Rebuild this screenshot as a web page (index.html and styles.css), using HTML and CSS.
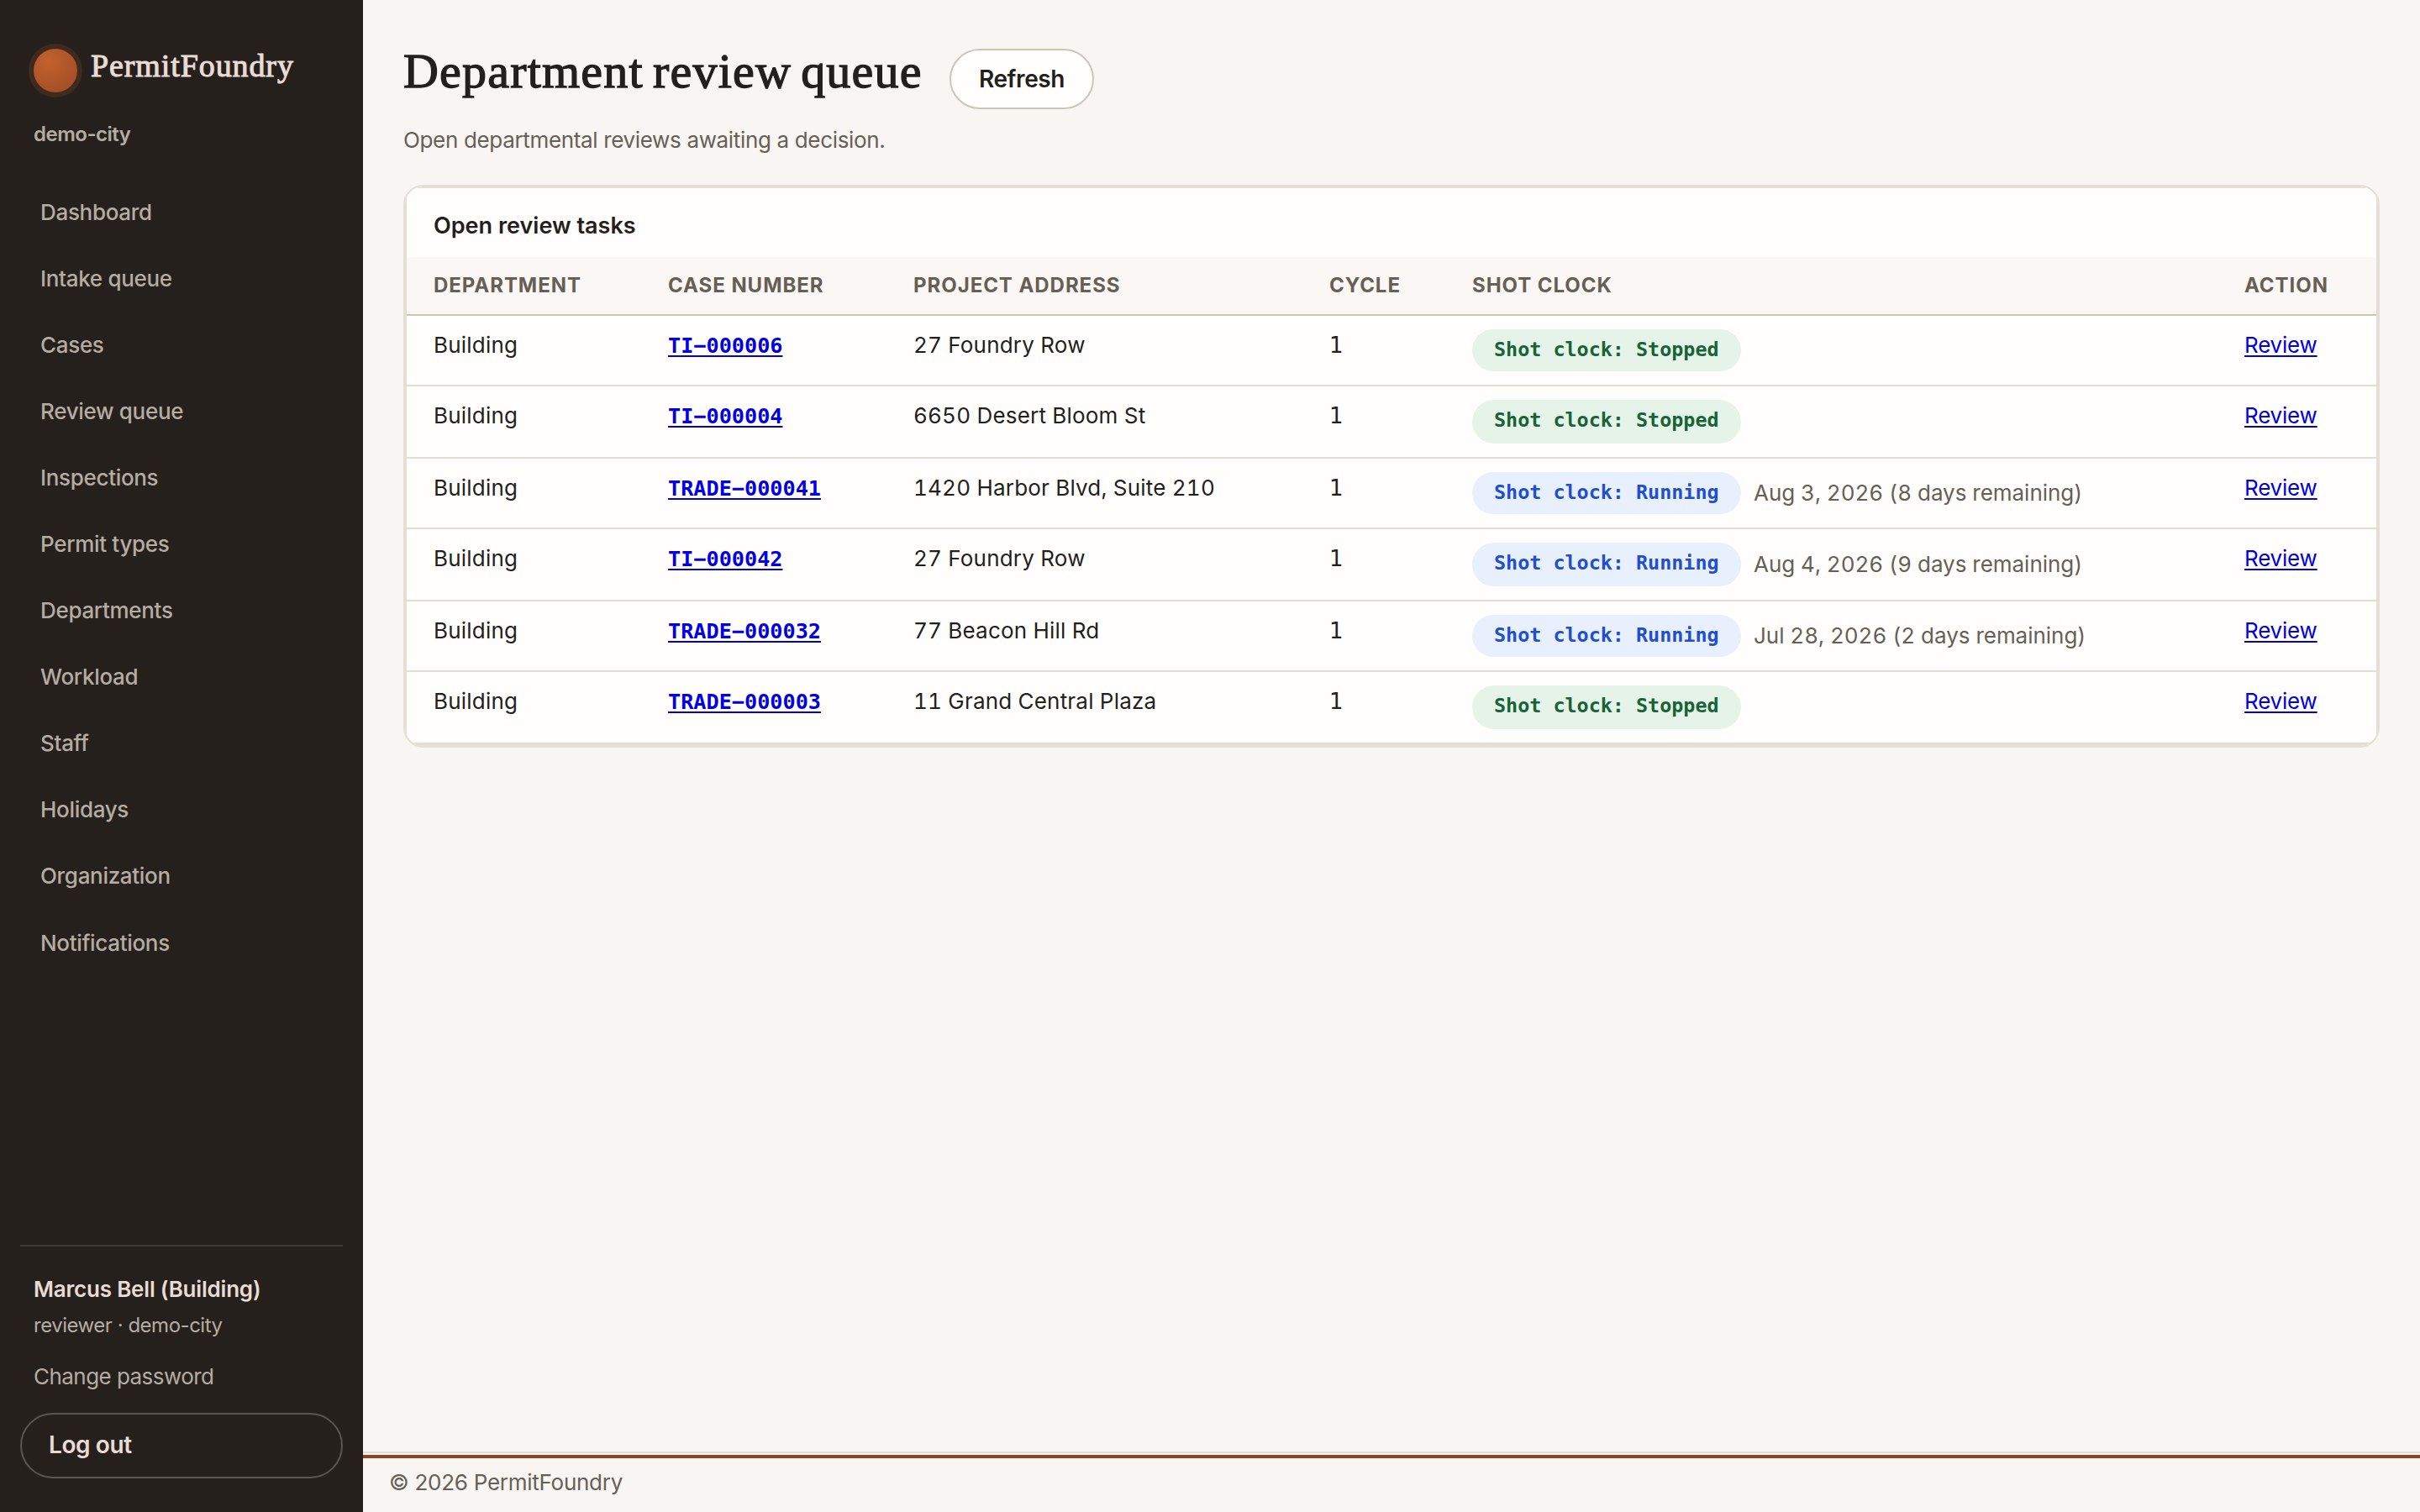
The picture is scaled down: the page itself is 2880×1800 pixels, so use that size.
FILE: index.html
```html
<!DOCTYPE html>
<html lang="en">
<head>
<meta charset="utf-8">
<title>Department review queue – PermitFoundry</title>
<link rel="stylesheet" href="styles.css">
</head>
<body>
<aside class="sidebar">
  <div class="brand"><span class="brand-mark"></span><span class="brand-name">PermitFoundry</span></div>
  <div class="tenant">demo-city</div>
  <nav class="nav">
    <a>Dashboard</a><a>Intake queue</a><a>Cases</a><a>Review queue</a><a>Inspections</a><a>Permit types</a><a>Departments</a><a>Workload</a><a>Staff</a><a>Holidays</a><a>Organization</a><a>Notifications</a>
  </nav>
  <div class="account">
    <div class="account-name">Marcus Bell (Building)</div>
    <div class="account-role">reviewer · demo-city</div>
    <a class="account-link">Change password</a>
    <button class="logout">Log out</button>
  </div>
</aside>
<div class="page">
  <main class="main">
    <header class="header"><h1 class="title">Department review queue</h1><button class="refresh">Refresh</button></header>
    <p class="subtitle">Open departmental reviews awaiting a decision.</p>
    <section class="card">
      <div class="card-inner">
        <h2 class="card-title">Open review tasks</h2>
        <table class="tasks">
          <colgroup><col class="c-dept"><col class="c-case"><col class="c-addr"><col class="c-cycle"><col class="c-clock"><col class="c-act"></colgroup>
          <thead><tr><th>Department</th><th>Case number</th><th>Project address</th><th>Cycle</th><th>Shot clock</th><th>Action</th></tr></thead>
          <tbody>
            <tr><td>Building</td><td><a class="case" href="#">TI−000006</a></td><td>27 Foundry Row</td><td class="cycle">1</td><td class="clock"><div class="clock-row"><span class="pill stopped">Shot clock: Stopped</span></div></td><td><a class="review" href="#">Review</a></td></tr>
            <tr><td>Building</td><td><a class="case" href="#">TI−000004</a></td><td>6650 Desert Bloom St</td><td class="cycle">1</td><td class="clock"><div class="clock-row"><span class="pill stopped">Shot clock: Stopped</span></div></td><td><a class="review" href="#">Review</a></td></tr>
            <tr><td>Building</td><td><a class="case" href="#">TRADE−000041</a></td><td>1420 Harbor Blvd, Suite 210</td><td class="cycle">1</td><td class="clock"><div class="clock-row"><span class="pill running">Shot clock: Running</span><span class="due">Aug 3, 2026 (8 days remaining)</span></div></td><td><a class="review" href="#">Review</a></td></tr>
            <tr><td>Building</td><td><a class="case" href="#">TI−000042</a></td><td>27 Foundry Row</td><td class="cycle">1</td><td class="clock"><div class="clock-row"><span class="pill running">Shot clock: Running</span><span class="due">Aug 4, 2026 (9 days remaining)</span></div></td><td><a class="review" href="#">Review</a></td></tr>
            <tr><td>Building</td><td><a class="case" href="#">TRADE−000032</a></td><td>77 Beacon Hill Rd</td><td class="cycle">1</td><td class="clock"><div class="clock-row"><span class="pill running">Shot clock: Running</span><span class="due">Jul 28, 2026 (2 days remaining)</span></div></td><td><a class="review" href="#">Review</a></td></tr>
            <tr><td>Building</td><td><a class="case" href="#">TRADE−000003</a></td><td>11 Grand Central Plaza</td><td class="cycle">1</td><td class="clock"><div class="clock-row"><span class="pill stopped">Shot clock: Stopped</span></div></td><td><a class="review" href="#">Review</a></td></tr>
          </tbody>
        </table>
      </div>
    </section>
  </main>
  <footer class="footer"><div class="footer-bar">© 2026 PermitFoundry</div></footer>
</div>
</body>
</html>
```
FILE: styles.css
```css
* { box-sizing: border-box; }

body {
  margin: 0;
  height: 1800px;
  display: flex;
  background: #f9f5f2;
  color: #231f1c;
  font: 400 26px/36px Inter, "Liberation Sans", sans-serif;
}

h1, h2, p { margin: 0; }

button { font-family: inherit; }

/* Sidebar */
.sidebar {
  width: 432px;
  height: 1800px;
  flex: none;
  display: flex;
  flex-direction: column;
  padding: 58px 24px 40px;
  background: #26201d;
  color: #b5aca2;
}

.brand {
  display: flex;
  align-items: center;
  gap: 16px;
  height: 52px;
  padding-left: 16px;
}

.brand-mark {
  width: 52px;
  height: 52px;
  border-radius: 50%;
  background: radial-gradient(circle at 35% 30%, #c2612e, #9c4a23);
  box-shadow: 0 0 0 6px #3f2a1f;
}

.brand-name {
  padding-bottom: 12px;
  font: 400 38px/40px "Liberation Serif", serif;
  letter-spacing: 0.9px;
  color: #e8ddd6;
  -webkit-text-stroke: 1px #e8ddd6;
}

.tenant {
  margin-top: 34px;
  padding-left: 16px;
  font-size: 24px;
  line-height: 32px;
  font-weight: 600;
  letter-spacing: -0.5px;
}

.nav {
  margin-top: 37px;
  display: flex;
  flex-direction: column;
}

.nav a {
  height: 79.06px;
  padding-left: 24px;
  line-height: 80px;
  font-weight: 500;
  letter-spacing: -0.32px;
}

.account {
  margin-top: auto;
  padding-top: 33px;
  border-top: 2px solid #3e3834;
  display: flex;
  flex-direction: column;
}

.account-name {
  padding-left: 16px;
  font-weight: 600;
  letter-spacing: -0.2px;
  color: #e8ddd6;
}

.account-role {
  margin-top: 7px;
  padding-left: 16px;
  font-size: 24px;
  letter-spacing: -0.48px;
}

.account-link {
  margin-top: 25px;
  padding-left: 16px;
  letter-spacing: -0.55px;
}

.logout {
  margin-top: 25px;
  height: 78px;
  padding: 0 32px 2px;
  border: 2px solid #5c5652;
  border-radius: 39px;
  background: transparent;
  color: #e8ddd6;
  font-size: 28px;
  font-weight: 600;
  letter-spacing: -0.4px;
  text-align: left;
}

/* Page */
.page {
  flex: 1;
  display: flex;
  flex-direction: column;
}

.main {
  flex: 1;
  padding: 52px 48px 0;
}

.header {
  display: flex;
  align-items: flex-start;
  justify-content: flex-start;
  height: 78px;
}

.title {
  width: 650px;
  padding-top: 1px;
  font: 400 58px/64px "Liberation Serif", serif;
  letter-spacing: 1.2px;
  word-spacing: -4.5px;
  white-space: nowrap;
  -webkit-text-stroke: 1.3px #231f1c;
}

.refresh {
  width: 172px;
  height: 72px;
  margin-top: 6px;
  padding: 0;
  border: 2px solid #cbc6bb;
  border-radius: 36px;
  background: #fffefc;
  color: #231f1c;
  font-size: 28px;
  font-weight: 600;
  letter-spacing: -0.4px;
}

.subtitle {
  margin-top: 19px;
  letter-spacing: -0.34px;
  color: #665f56;
}

.card {
  margin-top: 35px;
  border: 2px solid #e3dfd4;
  border-radius: 24px;
  overflow: hidden;
  background: #fffefc;
}

.card-inner { border: 2px solid #e3dfd4; }

.card-title {
  height: 82px;
  padding: 27px 32px 0;
  font-size: 27px;
  line-height: 36px;
  font-weight: 600;
}

.tasks {
  width: 100%;
  table-layout: fixed;
  border-collapse: separate;
  border-spacing: 0;
}

.c-dept { width: 279px; }
.c-case { width: 292px; }
.c-addr { width: 495px; }
.c-cycle { width: 170px; }
.c-clock { width: 919px; }
.c-act { width: 189px; }

.tasks th {
  height: 70px;
  padding: 16px 0 0 32px;
  border-bottom: 2px solid #cdc7b8;
  background: #fbf7f4;
  color: #665f56;
  font-size: 24px;
  font-weight: 700;
  letter-spacing: 0.95px;
  text-align: left;
  text-transform: uppercase;
  vertical-align: top;
}

.tasks td {
  height: 84px;
  padding: 17px 0 0 32px;
  border-bottom: 2px solid #e1ded5;
  letter-spacing: 0.2px;
  font-variant-numeric: tabular-nums;
  white-space: nowrap;
  vertical-align: top;
}

.tasks tr:nth-child(even) td { height: 86px; }

.tasks a {
  color: #0000e0;
  text-decoration-thickness: 2px;
  text-underline-offset: 3px;
}

.tasks .case {
  font: 700 25.2px/36px "DejaVu Sans Mono", "Liberation Mono", monospace;
  letter-spacing: 0;
}

.tasks .review { letter-spacing: -0.2px; }

.tasks .cycle { font-family: "DejaVu Sans", sans-serif; }

.tasks .clock { padding-top: 16px; }

.clock-row {
  display: flex;
  align-items: center;
  gap: 15px;
  height: 50px;
}

.tasks tr:nth-child(even) .clock-row { height: 52px; }

.pill {
  width: 320px;
  height: 100%;
  padding: 6px 0 0 26px;
  border-radius: 26px;
  font: 700 23.4px/36px "DejaVu Sans Mono", "Liberation Mono", monospace;
  letter-spacing: 0;
}

.stopped { background: #e5f3e8; color: #176337; }
.running { background: #e8effd; color: #1f4fcf; }

.due {
  height: 36px;
  color: #665f56;
  letter-spacing: -0.03px;
}

/* Footer */
.footer {
  height: 72px;
  padding-top: 2px;
  border-top: 2px solid #e3dfd4;
}

.footer-bar {
  border-top: 4px solid #8c4225;
  padding-left: 31px;
  line-height: 57px;
  letter-spacing: -0.27px;
  color: #665f56;
}
```
